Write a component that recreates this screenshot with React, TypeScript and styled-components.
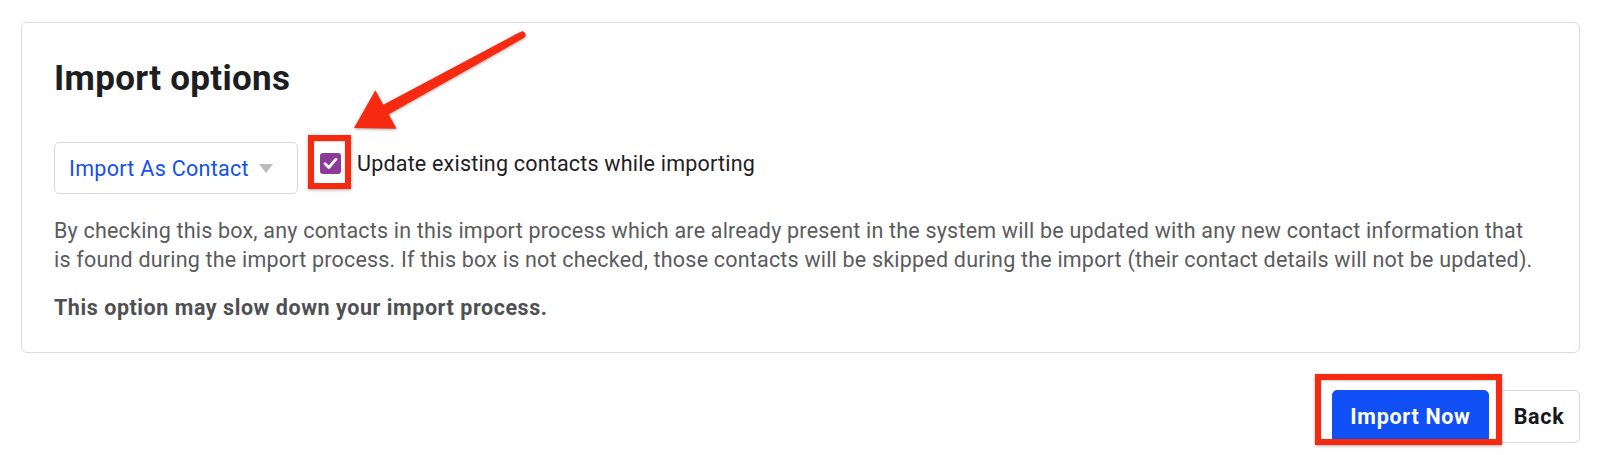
import React from "react";
import styled, { createGlobalStyle } from "styled-components";

const GlobalStyle = createGlobalStyle`
  html, body {
    margin: 0;
    padding: 0;
    background: #ffffff;
  }
  body {
    font-family: Roboto, "Liberation Sans", Arial, sans-serif;
    -webkit-font-smoothing: antialiased;
  }
`;

const Page = styled.div`
  position: relative;
  padding: 22px 20px 0 21px;
  height: 455px;
  box-sizing: border-box;
`;

const Card = styled.section`
  border: 1px solid #d9dce6;
  border-radius: 6px;
  padding: 35px 32px 30px 32px;
`;

const Title = styled.h2`
  margin: 0;
  font-size: 35px;
  line-height: 41px;
  font-weight: 700;
  letter-spacing: 0.3px;
  color: #1c1e22;
`;

const OptionRow = styled.div`
  display: flex;
  align-items: flex-start;
  margin-top: 36px;
`;

const Select = styled.div`
  box-sizing: border-box;
  display: flex;
  align-items: center;
  width: 244px;
  height: 52px;
  margin-top: 7px;
  padding: 0 24px 0 14px;
  border: 1px solid #d5d9e3;
  border-radius: 5px;
  background: #fff;
  color: #1450ee;
  font-size: 21.5px;
  letter-spacing: 0.3px;
`;

const Caret = styled.span`
  margin-left: auto;
  width: 0;
  height: 0;
  border-left: 7.5px solid transparent;
  border-right: 7.5px solid transparent;
  border-top: 9px solid #b9bbbf;
`;

const CheckField = styled.label`
  display: flex;
  align-items: flex-start;
  margin-left: 22px;
`;

const Anchor = styled.span`
  position: relative;
  display: inline-flex;
`;

const Checkbox = styled.span`
  display: inline-flex;
  align-items: center;
  justify-content: center;
  width: 21px;
  height: 21px;
  margin-top: 18px;
  border-radius: 3px;
  background: #8d3b98;
`;

const Highlight = styled.span<{ $t: number; $r: number; $b: number; $l: number }>`
  position: absolute;
  top: ${(p) => p.$t}px;
  right: ${(p) => p.$r}px;
  bottom: ${(p) => p.$b}px;
  left: ${(p) => p.$l}px;
  border: 6px solid #f62a10;
  box-shadow: 0 1px 3px rgba(0, 0, 0, 0.35), inset 0 1px 2px rgba(0, 0, 0, 0.2);
  pointer-events: none;
`;

const LabelText = styled.span`
  margin-left: 16px;
  margin-top: 16px;
  font-size: 21.5px;
  line-height: 26px;
  letter-spacing: 0.2px;
  color: #1f2023;
`;

const Help = styled.p<{ $bold?: boolean }>`
  margin: ${(p) => (p.$bold ? "19px" : "22px")} 0 0 0;
  font-size: 21.5px;
  line-height: 29px;
  letter-spacing: ${(p) => (p.$bold ? "0.55px" : "0.2px")};
  font-weight: ${(p) => (p.$bold ? 700 : 400)};
  color: ${(p) => (p.$bold ? "#4f5052" : "#5a5b5d")};
`;

const Actions = styled.div`
  display: flex;
  justify-content: flex-end;
  gap: 9px;
  margin-top: 37px;
`;

const Button = styled.button<{ $primary?: boolean }>`
  box-sizing: border-box;
  height: 53px;
  padding: 0;
  width: ${(p) => (p.$primary ? "157px" : "82px")};
  border-radius: 5px;
  border: 1px solid ${(p) => (p.$primary ? "#1150f5" : "#d5d9e2")};
  background: ${(p) => (p.$primary ? "#1150f5" : "#ffffff")};
  color: ${(p) => (p.$primary ? "#ffffff" : "#16181c")};
  font-family: inherit;
  font-size: 21.5px;
  letter-spacing: 0.7px;
  font-weight: 700;
  cursor: pointer;
`;

const Arrow = styled.svg`
  position: absolute;
  left: 330px;
  top: 20px;
  overflow: visible;
  filter: drop-shadow(0 1px 1.5px rgba(0, 0, 0, 0.35));
  pointer-events: none;
`;

export default function App() {
  return (
    <>
      <GlobalStyle />
      <Page>
        <Card>
          <Title>Import options</Title>
          <OptionRow>
            <Select>
              Import As Contact
              <Caret />
            </Select>
            <CheckField>
              <Anchor>
                <Checkbox>
                  <svg width="15" height="13" viewBox="0 0 15 13">
                    <path
                      d="M2 6.8 L5.8 10.6 L13 2.2"
                      fill="none"
                      stroke="#ffffff"
                      strokeWidth="2.8"
                      strokeLinecap="round"
                      strokeLinejoin="round"
                    />
                  </svg>
                </Checkbox>
                <Highlight $t={0} $r={-10} $b={-15} $l={-12} />
              </Anchor>
              <LabelText>Update existing contacts while importing</LabelText>
            </CheckField>
          </OptionRow>
          <Help>
            By checking this box, any contacts in this import process which are already present in the
            system will be updated with any new contact information that
            <br />
            is found during the import process. If this box is not checked, those contacts will be
            skipped during the import (their contact details will not be updated).
          </Help>
          <Help $bold>This option may slow down your import process.</Help>
        </Card>
        <Actions>
          <Anchor>
            <Button $primary>Import Now</Button>
            <Highlight $t={-16} $r={-13} $b={-2} $l={-17} />
          </Anchor>
          <Button>Back</Button>
        </Actions>
        <Arrow width="200" height="115" viewBox="0 0 200 115">
          <path
            d="M24 108 L45.4 70.2 L53.3 84.7 L190.3 11.9 A3.5 3.5 0 0 1 193.7 18.1 L58.7 94.3 L66.6 108.8 Z"
            fill="#f62a10"
          />
        </Arrow>
      </Page>
    </>
  );
}
